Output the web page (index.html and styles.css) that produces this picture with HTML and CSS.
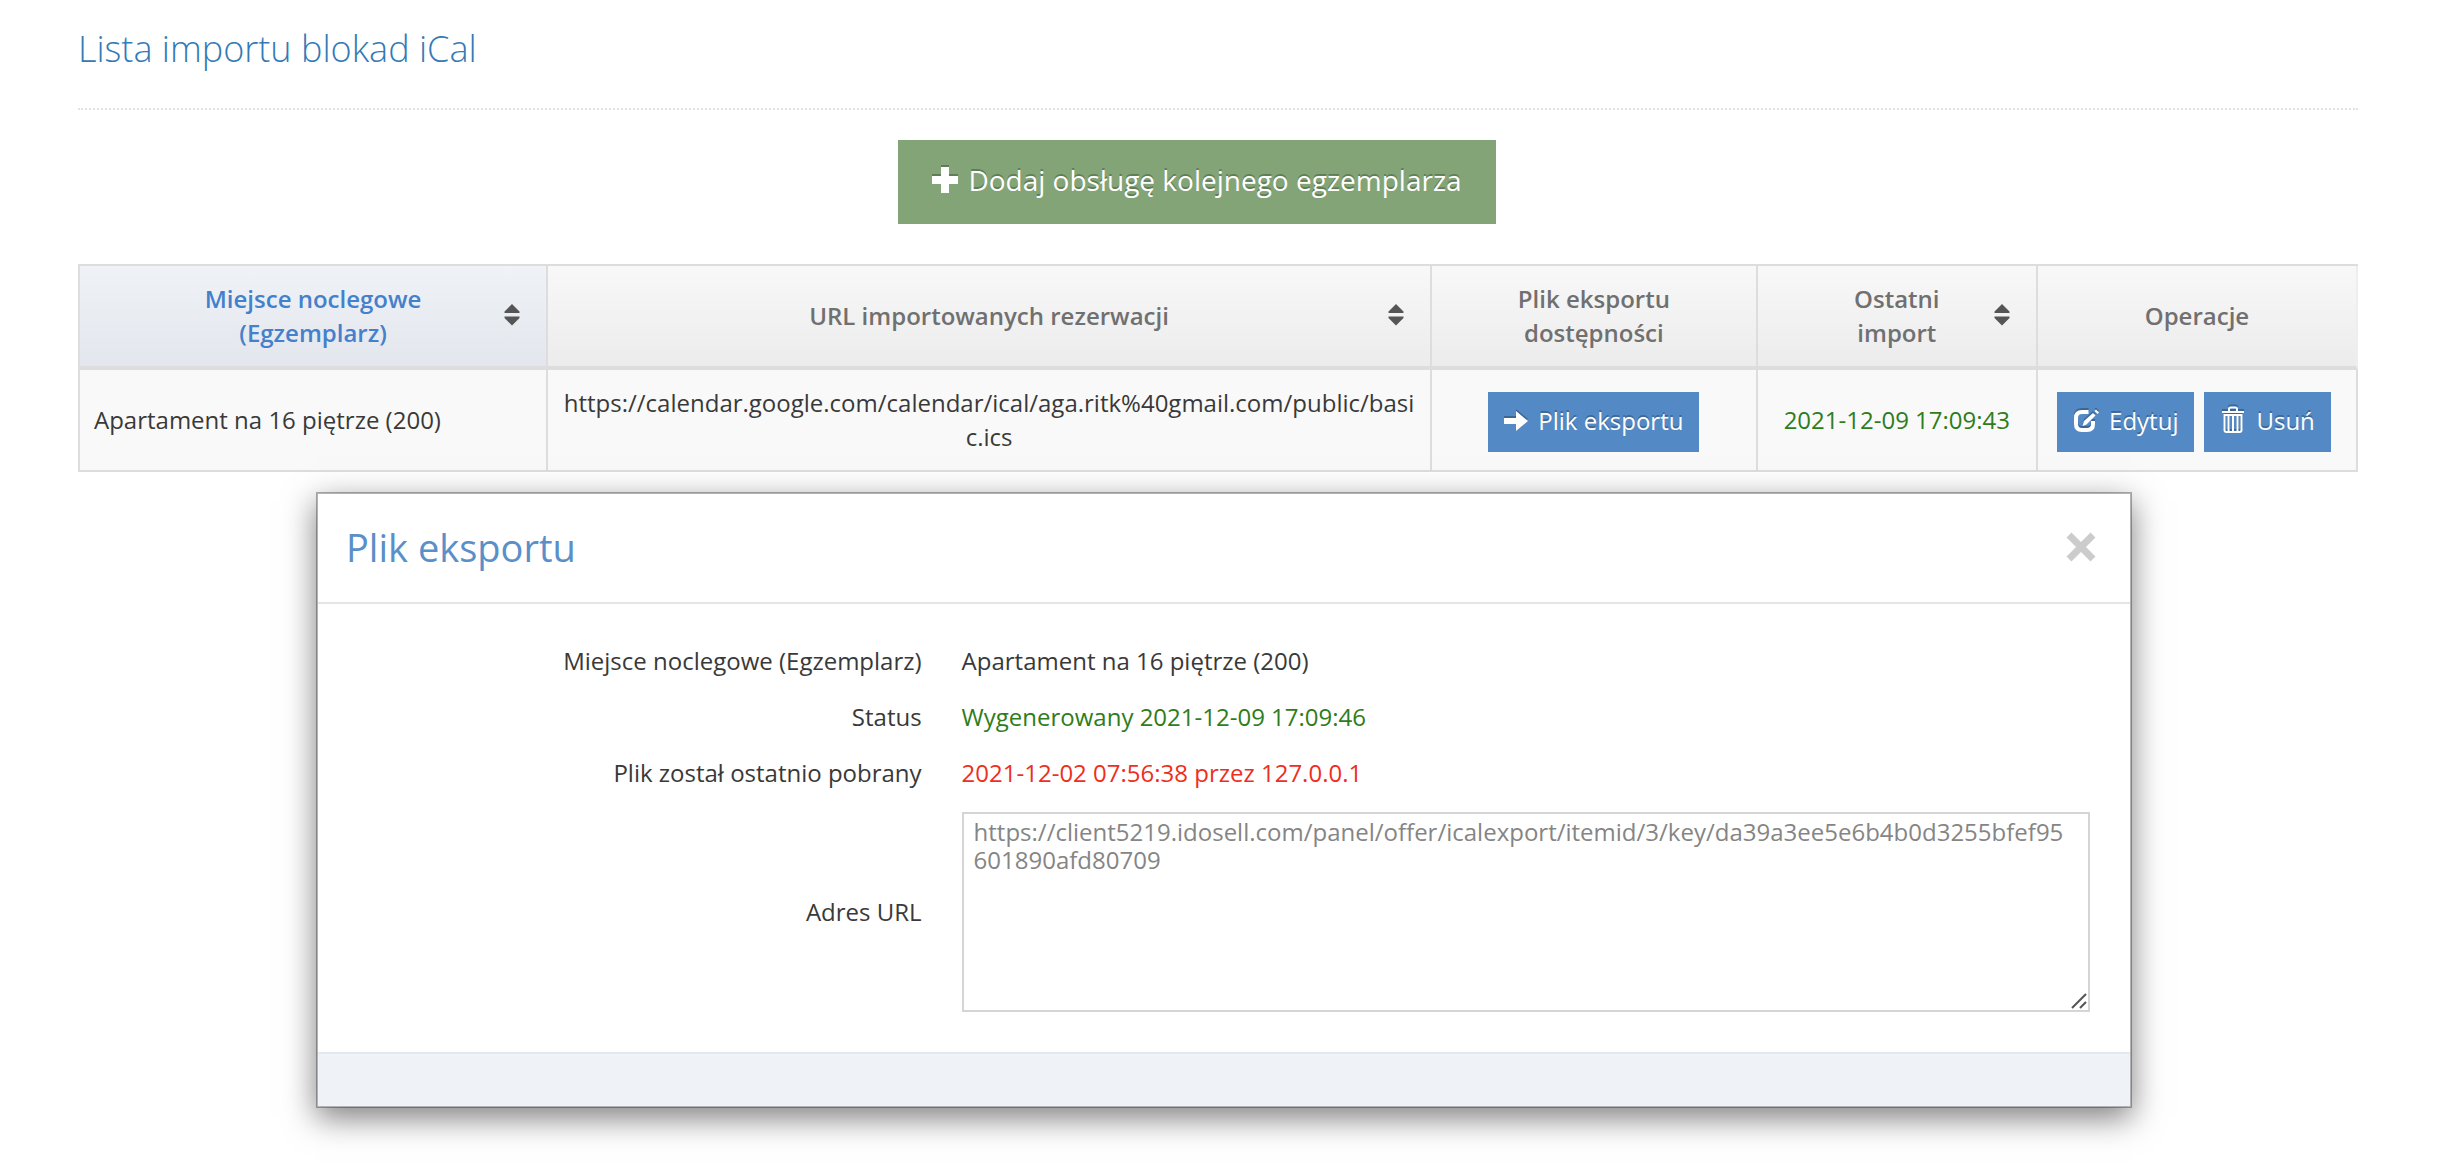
FILE: index.html
```html
<!DOCTYPE html>
<html lang="pl">
<head>
  <meta charset="utf-8">
  <meta name="viewport" content="width=device-width, initial-scale=1">
  <title>Lista importu blokad iCal</title>
  <link rel="stylesheet" href="styles.css">
</head>
<body>
  <main class="page">
    <h1 class="page-title">Lista importu blokad iCal</h1>

    <div class="toolbar">
      <button type="button" class="btn btn-add">
        <svg class="icon" width="26" height="26" viewBox="0 0 26 26" aria-hidden="true"><path d="M9 0h8v9h9v8h-9v9H9v-9H0V9h9z"/></svg>
        Dodaj obsługę kolejnego egzemplarza
      </button>
    </div>

    <table class="grid">
      <colgroup>
        <col class="col-place"><col class="col-url"><col class="col-export"><col class="col-import"><col class="col-ops">
      </colgroup>
      <thead>
        <tr>
          <th scope="col" class="sorted">
            <div class="th-sort"><span>Miejsce noclegowe<br>(Egzemplarz)</span>
              <svg class="sort" width="16" height="22" viewBox="0 0 16 22" aria-hidden="true"><path d="M8 0l7.500 7.500V9H.5V7.500zM8 21.500L.5 14v-1.500h15V14z"/></svg></div>
          </th>
          <th scope="col">
            <div class="th-sort"><span>URL importowanych rezerwacji</span>
              <svg class="sort" width="16" height="22" viewBox="0 0 16 22" aria-hidden="true"><path d="M8 0l7.500 7.500V9H.5V7.500zM8 21.500L.5 14v-1.500h15V14z"/></svg></div>
          </th>
          <th scope="col">Plik eksportu<br>dostępności</th>
          <th scope="col">
            <div class="th-sort"><span>Ostatni<br>import</span>
              <svg class="sort" width="16" height="22" viewBox="0 0 16 22" aria-hidden="true"><path d="M8 0l7.500 7.500V9H.5V7.500zM8 21.500L.5 14v-1.500h15V14z"/></svg></div>
          </th>
          <th scope="col">Operacje</th>
        </tr>
      </thead>
      <tbody>
        <tr>
          <td class="place">Apartament na 16 piętrze (200)</td>
          <td class="url">https://calendar.google.com/calendar/ical/aga.ritk%40gmail.com/public/basic.ics</td>
          <td class="actions">
            <div class="ops">
              <button type="button" class="btn">
                <svg class="icon" width="24" height="20" viewBox="0 0 24 20" aria-hidden="true"><path d="M0 7h12V0l12 10-12 10v-7H0z"/></svg>
                Plik eksportu
              </button>
            </div>
          </td>
          <td class="ok">2021-12-09 17:09:43</td>
          <td class="actions">
            <div class="ops ops-row">
              <button type="button" class="btn">
                <svg class="icon" width="26" height="24" viewBox="0 0 26 24" aria-hidden="true"><path class="line" d="M15.500 3H9C5 3 3 5 3 9v6c0 4 2 6 6 6h5c4 0 6-2 6-6v-3"/><path d="M9.500 17l1.500-5L20 4l2.500 2.500-9 9z"/><path d="M21.500 2L23 .5 26 3.500 24.500 5z"/></svg>
                Edytuj
              </button>
              <button type="button" class="btn">
                <svg class="icon" width="26" height="30" viewBox="-2 0 26 30" aria-hidden="true"><path class="thin" d="M7 5V3q0-1.500 1.500-1.500h5Q15 1.500 15 3v2M2.500 9v15q0 2 2 2h13q2 0 2-2V9zM6.500 9v17M11 9v17M15.500 9v17"/><path d="M0 5h22v2H0z"/></svg>
                Usuń
              </button>
            </div>
          </td>
        </tr>
      </tbody>
    </table>

    <section class="modal" role="dialog" aria-labelledby="modal-title">
      <header class="modal-header">
        <h2 class="modal-title" id="modal-title">Plik eksportu</h2>
        <button type="button" class="close" aria-label="Zamknij">
          <svg width="30" height="30" viewBox="0 0 30 30" aria-hidden="true"><path d="M3 3l24 24M27 3L3 27"/></svg>
        </button>
      </header>
      <div class="modal-body">
        <dl class="details">
          <dt>Miejsce noclegowe (Egzemplarz)</dt>
          <dd>Apartament na 16 piętrze (200)</dd>
          <dt>Status</dt>
          <dd class="ok">Wygenerowany 2021-12-09 17:09:46</dd>
          <dt>Plik został ostatnio pobrany</dt>
          <dd class="warn">2021-12-02 07:56:38 przez 127.0.0.1</dd>
          <dt><label for="export-url">Adres URL</label></dt>
          <dd class="field">
            <textarea id="export-url" class="url-box" spellcheck="false">https://client5219.idosell.com/panel/offer/icalexport/itemid/3/key/da39a3ee5e6b4b0d3255bfef95601890afd80709</textarea>
            <svg class="grip" width="16" height="16" viewBox="0 0 16 16" aria-hidden="true"><path d="M1 15L15 1M9 15l6-6"/></svg>
          </dd>
        </dl>
      </div>
      <footer class="modal-footer"></footer>
    </section>
  </main>
</body>
</html>
```
FILE: styles.css
```css
* {
  box-sizing: border-box;
}

body {
  margin: 0;
  background: #fff;
  color: #393939;
  font: 24px/34px "Open Sans", "Noto Sans", sans-serif;
}

.page {
  padding: 24px 90px 66px 78px;
}

.page-title {
  margin: 0;
  padding-bottom: 34px;
  border-bottom: 2px dotted #e2e2e2;
  color: #337ab7;
  font-size: 36px;
  font-weight: 300;
  line-height: 50px;
}

.toolbar {
  display: flex;
  justify-content: center;
  padding: 30px 42px 40px 0;
}

.btn {
  display: inline-flex;
  align-items: center;
  gap: 10px;
  padding: 12px 16px 14px;
  border: 0;
  background: #5389c5;
  color: #fff;
  font: inherit;
  text-shadow: 0 -2px 0 rgba(0, 0, 0, .25);
  white-space: nowrap;
  cursor: pointer;
}

.btn-add {
  padding: 20px 34px 24px;
  background: #83a476;
  font-size: 28px;
  line-height: 40px;
}

.icon {
  flex: none;
  fill: #fff;
  filter: drop-shadow(0 -2px 0 rgba(0, 0, 0, .25));
}

.icon .line {
  fill: none;
  stroke: #fff;
  stroke-width: 4;
}

.icon .thin {
  fill: none;
  stroke: #fff;
  stroke-width: 2;
}

/* Table */
.grid {
  width: 100%;
  table-layout: fixed;
  border-spacing: 0;
  border: 2px solid #ddd;
  border-width: 2px 0 0 2px;
}

.col-place { width: 20.55%; }
.col-url { width: 38.8%; }
.col-export { width: 14.3%; }
.col-import { width: 12.3%; }
.col-ops { width: 14.05%; }

.grid th,
.grid td {
  padding: 16px 14px;
  border-right: 2px solid #ddd;
  text-align: center;
}

.grid th {
  border-bottom: 4px solid #ddd;
  background: linear-gradient(#f8f8f8, #ececec);
  color: #707070;
  font-weight: 600;
}

.grid th:last-child {
  border-right-color: #eee;
}

.grid th.sorted {
  background: linear-gradient(#eff3f8, #e3e7ed);
  color: #4480cc;
}

.grid td {
  border-bottom: 2px solid #ddd;
  background: #f9f9f9;
}

.grid td.place {
  text-align: left;
}

.grid td.actions {
  padding-top: 20px;
}

.url {
  word-break: break-all;
}

.th-sort {
  display: flex;
  align-items: center;
  padding: 0 12px 0 28px;
}

.th-sort span {
  flex: 1;
}

.sort {
  flex: none;
  margin-bottom: 2px;
  fill: #555;
}

.ops {
  display: flex;
  justify-content: center;
}

.ops-row {
  gap: 10px;
  padding-right: 6px;
}

.ok {
  color: #2e7d1a;
}

.warn {
  color: #ee2e1e;
}

/* Dialog */
.modal {
  margin: 20px 226px 0 238px;
  border: 2px solid rgba(0, 0, 0, .3);
  background: #fff;
  background-clip: padding-box;
  box-shadow: 0 10px 30px rgba(0, 0, 0, .5);
}

.modal-header {
  display: flex;
  align-items: center;
  justify-content: space-between;
  padding: 25px 34px 27px 28px;
  border-bottom: 2px solid #e5e5e5;
}

.modal-title {
  margin: 0;
  color: #5a8fc8;
  font-size: 38px;
  font-weight: 400;
  line-height: 56px;
}

.close {
  display: flex;
  padding: 0;
  border: 0;
  background: none;
  cursor: pointer;
}

.close path {
  stroke: #ccc;
  stroke-width: 7;
}

.modal-body {
  padding: 40px 40px 40px 36px;
}

.details {
  display: grid;
  grid-template-columns: 35% 65%;
  align-items: center;
  row-gap: 22px;
  margin: 0;
}

.details dt {
  padding-right: 40px;
  text-align: right;
}

.details dd {
  margin: 0;
}

.field {
  position: relative;
}

.url-box {
  display: block;
  width: 100%;
  height: 200px;
  padding: 4px 20px 4px 10px;
  border: 2px solid #d5d5d5;
  border-radius: 0;
  background: #fff;
  color: #858585;
  font: inherit;
  line-height: 28px;
  word-break: break-all;
  resize: none;
}

.grip {
  position: absolute;
  right: 3px;
  bottom: 3px;
  stroke: #555;
  stroke-width: 2;
  pointer-events: none;
}

.modal-footer {
  height: 54px;
  border-top: 2px solid #e4e9ee;
  background: #eff3f8;
}
```
